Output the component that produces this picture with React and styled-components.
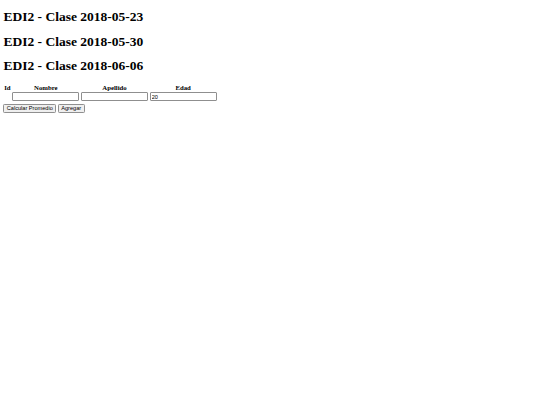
import React, { useState } from 'react';
import styled, { createGlobalStyle } from 'styled-components';

const GlobalStyle = createGlobalStyle`
  html, body {
    margin: 0;
    background: #ffffff;
  }
`;

const clases = ['2018-05-23', '2018-05-30', '2018-06-06'];

const App = () => {
  const [nombre, setNombre] = useState('');
  const [apellido, setApellido] = useState('');
  const [edad, setEdad] = useState('20');

  return (
    <>
      <GlobalStyle />
      <Page>
        {clases.map((fecha) => (
          <Title key={fecha}>EDI2 - Clase {fecha}</Title>
        ))}
        <Table>
          <thead>
            <tr>
              <Th>Id</Th>
              <Th>Nombre</Th>
              <Th>Apellido</Th>
              <Th>Edad</Th>
            </tr>
          </thead>
          <tbody>
            <tr>
              <Td />
              <Td>
                <TextInput value={nombre} onChange={(e) => setNombre(e.target.value)} />
              </Td>
              <Td>
                <TextInput value={apellido} onChange={(e) => setApellido(e.target.value)} />
              </Td>
              <Td>
                <TextInput value={edad} onChange={(e) => setEdad(e.target.value)} />
              </Td>
            </tr>
          </tbody>
        </Table>
        <Actions>
          <Button type='button'>Calcular Promedio</Button>
          <Button type='button'>Agregar</Button>
        </Actions>
      </Page>
    </>
  );
};

const Page = styled.div`
  padding: 0 3.4px;
  font-family: 'Liberation Serif', 'Times New Roman', serif;
  color: #000000;
  display: flow-root;
`;

const Title = styled.h1`
  font-size: 13.5px;
  font-weight: bold;
  line-height: 15.5px;
  margin: 9.05px 0;
`;

/* border-spacing only takes whole pixels, so the gaps live in the cell padding */
const Table = styled.table`
  border-collapse: separate;
  border-spacing: 0;
  margin-top: 1.7px;
`;

const Th = styled.th`
  font-size: 6.75px;
  font-weight: bold;
  line-height: 7.8px;
  padding: 0.9px 0.85px 0.3px;
  text-align: center;
`;

const Td = styled.td`
  padding: 0.6px 0.85px 0.5px;
`;

const TextInput = styled.input`
  display: block;
  box-sizing: border-box;
  width: 67px;
  height: 9px;
  margin: 0;
  padding: 0 1px;
  border: 0.7px solid #8f8f8f;
  border-radius: 1px;
  font-family: 'Liberation Sans', Arial, sans-serif;
  font-size: 5.6px;
  color: #000000;
  background: #ffffff;
  outline: none;
`;

const Actions = styled.div`
  display: flex;
  gap: 1.7px;
  margin-top: 2.6px;
`;

const Button = styled.button`
  box-sizing: border-box;
  height: 8.2px;
  margin: 0;
  padding: 0 2.4px;
  border: 0.7px solid #8f8f8f;
  border-radius: 1.3px;
  background: #efefef;
  font-family: 'Liberation Sans', Arial, sans-serif;
  font-size: 5.6px;
  line-height: 1;
  color: #000000;
`;

export default App;
